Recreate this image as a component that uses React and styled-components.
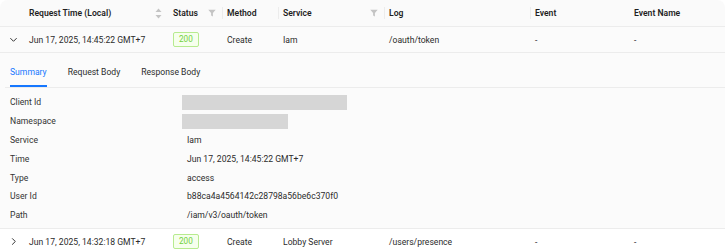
import styled, { createGlobalStyle } from "styled-components";

const GlobalStyle = createGlobalStyle`
  body {
    margin: 0;
    background: #ffffff;
    font-family: Roboto, "Liberation Sans", Arial, sans-serif;
    font-size: 8.6px;
    color: rgba(0, 0, 0, 0.88);
  }
`;

const COLS = "24px 144px 54px 56px 106px 146px 99px 1fr";

const Table = styled.div`
  width: 725px;
`;

const HeadRow = styled.div`
  display: grid;
  grid-template-columns: ${COLS};
  height: 27px;
  background: #fafafa;
  border-bottom: 1px solid #ececec;
  border-radius: 8px 8px 0 0;
  box-sizing: border-box;
`;

const HeadCell = styled.div`
  position: relative;
  display: flex;
  align-items: center;
  justify-content: space-between;
  padding: 0 6px 0 5px;
  font-weight: 600;
  color: #1f1f1f;

  &::before {
    content: "";
    display: ${(p) => (p.$sep ? "block" : "none")};
    position: absolute;
    left: 0;
    top: 7px;
    bottom: 7px;
    width: 1px;
    background: #ececec;
  }
`;

const Row = styled.div`
  display: grid;
  grid-template-columns: ${COLS};
  height: 26px;
  background: ${(p) => (p.$shade ? "#fbfbfb" : "#ffffff")};
  border-bottom: 1px solid #ececec;
  box-sizing: border-box;
`;

const Cell = styled.div`
  display: flex;
  align-items: center;
  padding-left: 5px;
  white-space: nowrap;
  color: #2b2b2b;
`;

const ExpandCell = styled(Cell)`
  padding-left: 9px;
`;

const Badge = styled.span`
  display: inline-block;
  padding: 0 5px;
  height: 13px;
  line-height: 13px;
  font-size: 8.2px;
  color: #73d13d;
  background: #f6ffed;
  border: 1px solid #b7eb8f;
  border-radius: 2px;
`;

const Expanded = styled.div`
  background: #fbfbfb;
  border-bottom: 1px solid #ececec;
  height: 176px;
  box-sizing: border-box;
  padding: 4px 0 0 5px;
`;

const TabNav = styled.div`
  display: flex;
  gap: 21px;
  height: 30px;
  border-bottom: 1px solid #ececec;
  padding-left: 5px;
`;

const Tab = styled.div`
  display: flex;
  align-items: center;
  height: 100%;
  box-sizing: border-box;
  color: ${(p) => (p.$active ? "#1677ff" : "#2b2b2b")};
  border-bottom: 2px solid ${(p) => (p.$active ? "#1677ff" : "transparent")};
  padding-top: 2px;
`;

const Details = styled.div`
  padding-top: 5px;
  display: grid;
  grid-template-columns: 177px 1fr;
  grid-auto-rows: 18.8px;
`;

const Label = styled.div`
  display: flex;
  align-items: center;
  padding-left: 5px;
  color: #333333;
`;

const Value = styled.div`
  display: flex;
  align-items: center;
  padding-left: ${(p) => (p.$bar ? 0 : 5)}px;
  color: #2b2b2b;
`;

const Redacted = styled.div`
  width: ${(p) => p.$w}px;
  height: 15px;
  background: #d6d6d6;
`;

const Chevron = ({ open }) => (
  <svg width="9" height="9" viewBox="0 0 10 10">
    <polyline
      points={open ? "1.5,3.5 5,7 8.5,3.5" : "3.5,1.5 7,5 3.5,8.5"}
      fill="none"
      stroke="#333"
      strokeWidth="1.1"
    />
  </svg>
);

const SortIcon = () => (
  <svg width="7" height="11" viewBox="0 0 7 11">
    <path d="M3.5 0.5 L6.5 4 L0.5 4 Z" fill="#c4c4c4" />
    <path d="M3.5 10.5 L6.5 7 L0.5 7 Z" fill="#c4c4c4" />
  </svg>
);

const FilterIcon = () => (
  <svg width="8" height="8" viewBox="0 0 8 8">
    <path d="M0.3 0.8 H7.7 L4.9 4 V7.5 L3.1 6.6 V4 Z" fill="#c4c4c4" />
  </svg>
);

const columns = [
  { title: "" },
  { title: "Request Time (Local)", icon: <SortIcon /> },
  { title: "Status", icon: <FilterIcon /> },
  { title: "Method", sep: true },
  { title: "Service", sep: true, icon: <FilterIcon /> },
  { title: "Log", sep: true },
  { title: "Event", sep: true },
  { title: "Event Name" },
];

const details = [
  ["Client Id", { bar: 165 }],
  ["Namespace", { bar: 106 }],
  ["Service", "Iam"],
  ["Time", "Jun 17, 2025, 14:45:22 GMT+7"],
  ["Type", "access"],
  ["User Id", "b88ca4a4564142c28798a56be6c370f0"],
  ["Path", "/iam/v3/oauth/token"],
];

const LogRow = ({ open, time, service, log, shade }) => (
  <Row $shade={shade}>
    <ExpandCell>
      <Chevron open={open} />
    </ExpandCell>
    <Cell>{time}</Cell>
    <Cell>
      <Badge>200</Badge>
    </Cell>
    <Cell>Create</Cell>
    <Cell>{service}</Cell>
    <Cell>{log}</Cell>
    <Cell>-</Cell>
    <Cell>-</Cell>
  </Row>
);

export default function App() {
  return (
    <>
      <GlobalStyle />
      <Table>
        <HeadRow>
          {columns.map((c, i) => (
            <HeadCell key={i} $sep={c.sep}>
              <span>{c.title}</span>
              {c.icon}
            </HeadCell>
          ))}
        </HeadRow>
        <LogRow
          open
          shade
          time="Jun 17, 2025, 14:45:22 GMT+7"
          service="Iam"
          log="/oauth/token"
        />
        <Expanded>
          <TabNav>
            <Tab $active>Summary</Tab>
            <Tab>Request Body</Tab>
            <Tab>Response Body</Tab>
          </TabNav>
          <Details>
            {details.map(([label, value]) =>
              typeof value === "string"
                ? [<Label key={label + "l"}>{label}</Label>, <Value key={label + "v"}>{value}</Value>]
                : [
                    <Label key={label + "l"}>{label}</Label>,
                    <Value key={label + "v"} $bar>
                      <Redacted $w={value.bar} />
                    </Value>,
                  ]
            )}
          </Details>
        </Expanded>
        <LogRow
          time="Jun 17, 2025, 14:32:18 GMT+7"
          service="Lobby Server"
          log="/users/presence"
        />
      </Table>
    </>
  );
}
